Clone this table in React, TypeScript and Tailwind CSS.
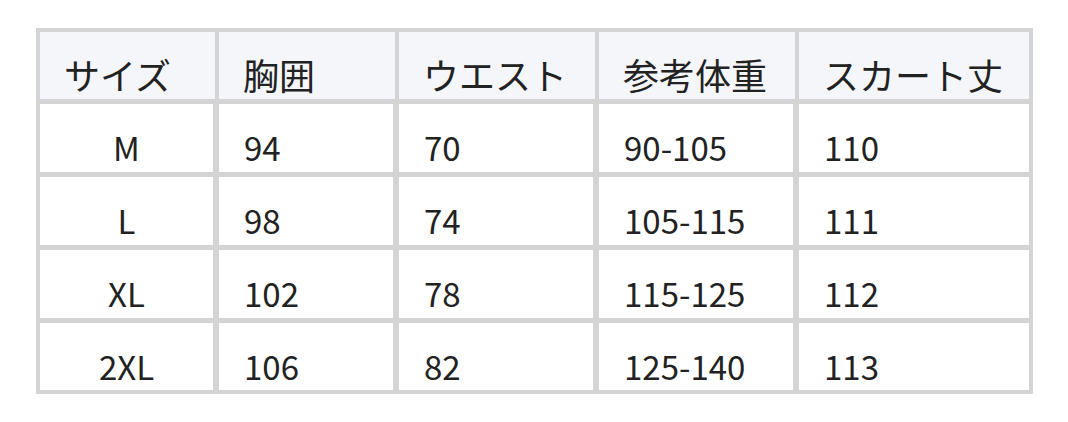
const headers = ["サイズ", "胸囲", "ウエスト", "参考体重", "スカート丈"];

const rows = [
  ["M", "94", "70", "90-105", "110"],
  ["L", "98", "74", "105-115", "111"],
  ["XL", "102", "78", "115-125", "112"],
  ["2XL", "106", "82", "125-140", "113"],
];

export default function App() {
  return (
    <div
      className="w-[1068px] h-[422px] bg-white pt-[28px] pl-[36px] text-[#222222]"
      style={{ fontFamily: '"Noto Sans CJK JP", "Noto Sans", sans-serif' }}
    >
      <div className="w-[997px] border-[4px] border-[#d4d4d4] bg-[#d4d4d4] flex flex-col gap-[5px]">
        <div className="grid grid-cols-[175px_176px_196px_196px_230px] gap-x-[4px]">
          {headers.map((h) => (
            <div
              key={h}
              className="h-[67px] bg-[#f5f6fa] pt-[24px] pl-[24px] text-[36px] leading-none whitespace-nowrap"
            >
              {h}
            </div>
          ))}
        </div>
        {rows.map((row, i) => (
          <div
            key={row[0]}
            className="grid grid-cols-[173px_174px_194px_194px_230px] gap-x-[6px]"
          >
            {row.map((cell, j) => (
              <div
                key={j}
                className={
                  (i === 3 ? "h-[67px] " : "h-[68px] ") +
                  (j === 0 ? "text-center " : "pl-[25px] ") +
                  "bg-white pt-[27px] text-[33px] leading-none whitespace-nowrap"
                }
              >
                {cell}
              </div>
            ))}
          </div>
        ))}
      </div>
    </div>
  );
}
